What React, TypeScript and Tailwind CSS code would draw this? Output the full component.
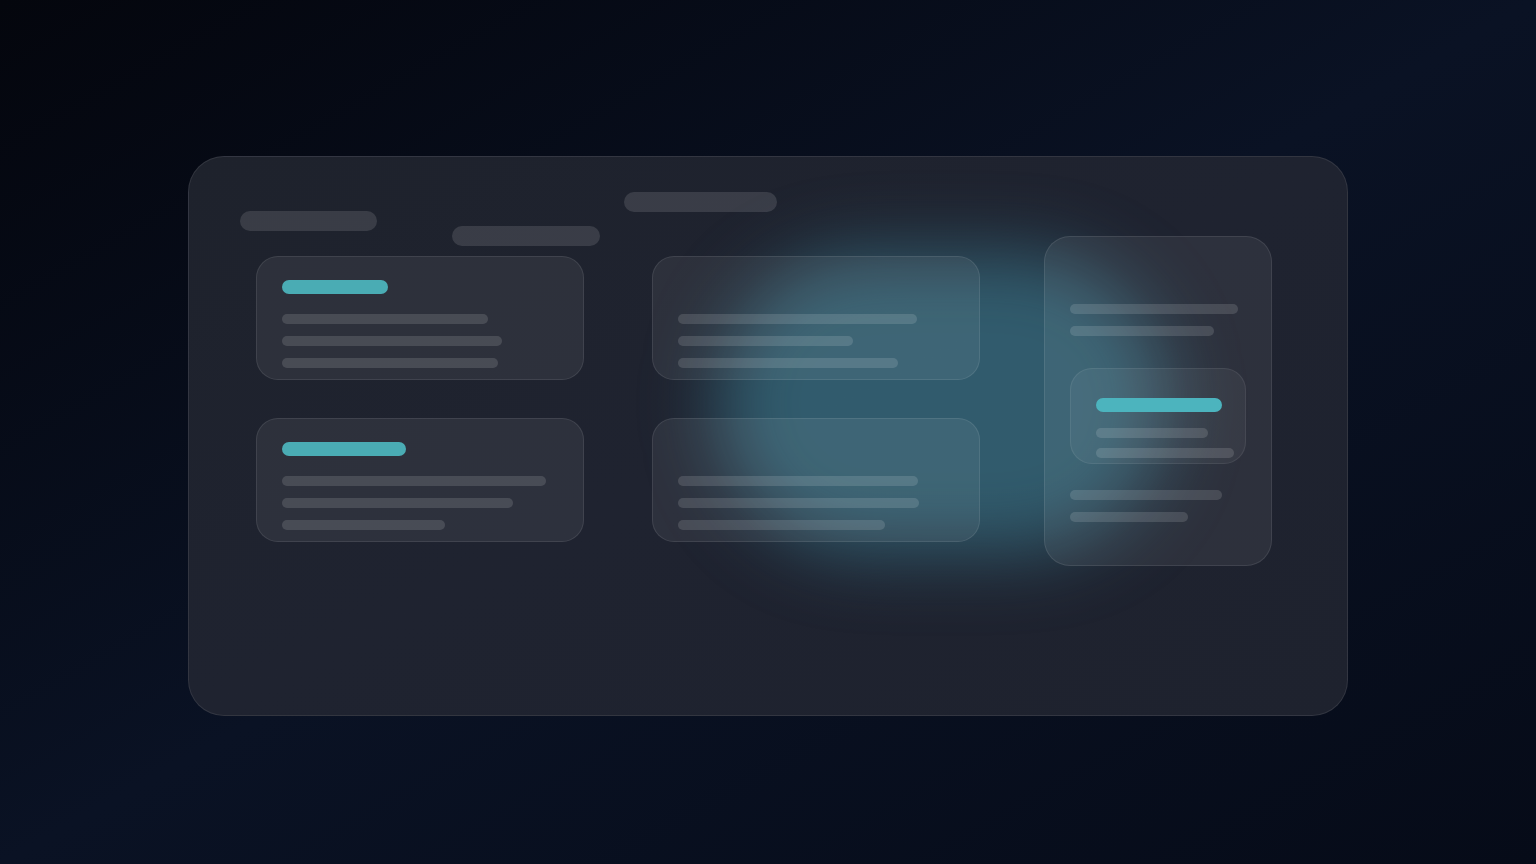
import React from "react";

const Line = ({ w, className = "" }: { w: string; className?: string }) => (
  <div className={`h-[10px] rounded-full bg-white/[0.13] ${w} ${className}`} />
);

const Card = ({
  teal,
  lines,
}: {
  teal?: string;
  lines: string[];
}) => (
  <div className="h-[124px] w-[328px] rounded-[22px] border border-white/[0.09] bg-white/[0.065] px-[25px] pt-[23px]">
    <div className={`h-[14px] rounded-full ${teal ? `${teal} bg-[#4aacb4]` : "w-0"}`} />
    <div className="mt-[20px] flex flex-col gap-[12px]">
      {lines.map((w, i) => (
        <Line key={i} w={w} />
      ))}
    </div>
  </div>
);

export default function App() {
  return (
    <div
      className="flex h-[864px] w-full items-start justify-center bg-gradient-to-br from-[#04060d] via-[#0a1224] to-[#060b18] pt-[156px]"
      style={{ fontFamily: "Inter, 'Liberation Sans', sans-serif" }}
    >
      <div className="relative h-[560px] w-[1160px] overflow-hidden rounded-[36px] border border-white/[0.09] bg-gradient-to-br from-[#1e222c] via-[#1f2330] to-[#1e222e]">
        {/* soft glow */}
        <div className="pointer-events-none absolute left-[528px] top-[96px] h-[300px] w-[450px] rounded-full bg-[#4393aa]/50 blur-[36px]" />
        <div className="relative z-10 flex items-start">
          {/* left area */}
          <div className="pl-[51px] pt-[35px]">
            <div className="flex h-[54px] items-start">
              <div className="mt-[19px] h-[20px] w-[137px] rounded-full bg-white/[0.12]" />
              <div className="ml-[75px] mt-[34px] h-[20px] w-[148px] rounded-full bg-white/[0.12]" />
              <div className="ml-[24px] h-[20px] w-[153px] rounded-full bg-white/[0.12]" />
            </div>
            <div className="ml-[16px] mt-[10px] grid grid-cols-[328px_328px] gap-x-[68px] gap-y-[38px]">
              <Card teal="w-[106px]" lines={["w-[206px]", "w-[220px]", "w-[216px]"]} />
              <Card lines={["w-[239px]", "w-[175px]", "w-[220px]"]} />
              <Card teal="w-[124px]" lines={["w-[264px]", "w-[231px]", "w-[163px]"]} />
              <Card lines={["w-[240px]", "w-[241px]", "w-[207px]"]} />
            </div>
          </div>
          {/* right card */}
          <div className="ml-[64px] mt-[79px] h-[330px] w-[228px] rounded-[26px] border border-white/[0.09] bg-white/[0.065] px-[25px] pt-[67px]">
            <div className="flex flex-col gap-[12px]">
              <Line w="w-[168px]" />
              <Line w="w-[144px]" />
            </div>
            <div className="mt-[32px] h-[96px] w-[176px] rounded-[22px] border border-white/[0.07] bg-white/[0.05] px-[25px] pt-[29px]">
              <div className="h-[14px] w-[126px] rounded-full bg-[#4cb4be]" />
              <div className="mt-[16px] flex flex-col gap-[10px]">
                <Line w="w-[112px]" />
                <Line w="w-[138px]" />
              </div>
            </div>
            <div className="mt-[26px] flex flex-col gap-[12px]">
              <Line w="w-[152px]" />
              <Line w="w-[118px]" />
            </div>
          </div>
        </div>
      </div>
    </div>
  );
}
